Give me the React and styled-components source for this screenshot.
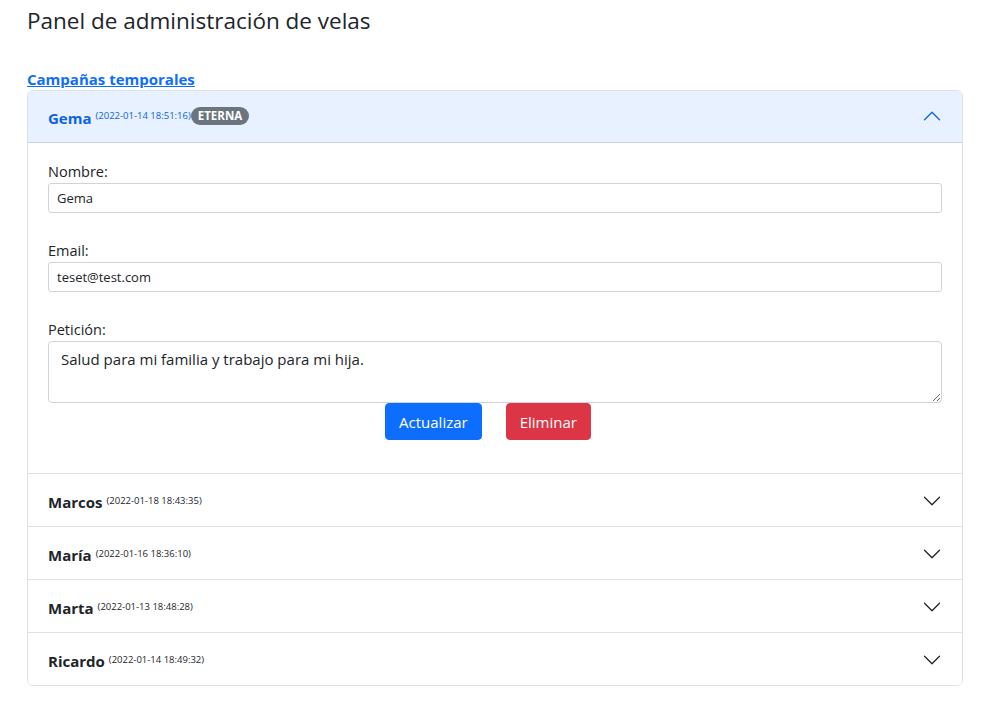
import React from "react";
import styled, { createGlobalStyle } from "styled-components";

const Global = createGlobalStyle`
  html, body { margin: 0; padding: 0; background: #fff; }
  body { font-family: "Open Sans", "Noto Sans", sans-serif; color: #212529; }
  * { box-sizing: border-box; }
`;

const Page = styled.div`
  padding: 6px 24px 20px 27px;
`;

const Title = styled.h1`
  margin: 0;
  font-size: 22.5px;
  font-weight: 500;
  line-height: 30px;
  color: #212529;
`;

const SectionLink = styled.a`
  display: inline-block;
  margin-top: 33px;
  font-size: 15px;
  font-weight: 700;
  line-height: 21px;
  color: #0d6efd;
  text-decoration: underline;
`;

const Accordion = styled.div`
  border: 1px solid #dee2e6;
  border-radius: 6px;
  overflow: hidden;
`;

const Item = styled.div`
  & + & { border-top: 1px solid #dee2e6; }
`;

const Header = styled.div`
  display: flex;
  align-items: center;
  height: 52px;
  padding: 0 20px;
  background: ${(p) => (p.$open ? "#e7f1ff" : "#fff")};
  color: ${(p) => (p.$open ? "#0c63e4" : "#212529")};
  box-shadow: ${(p) => (p.$open ? "inset 0 -1px 0 rgba(0,0,0,.125)" : "none")};
`;

const Name = styled.span`
  font-size: 15px;
  font-weight: 700;
  margin-top: ${(p) => (p.$open ? "1px" : "4px")};
`;

const DateText = styled.span`
  font-size: 9.5px;
  margin-left: 4px;
  margin-top: ${(p) => (p.$open ? "-3px" : "0px")};
`;

const Badge = styled.span`
  display: inline-block;
  background: #6c757d;
  color: #fff;
  font-size: 11.5px;
  font-weight: 700;
  border-radius: 10px;
  padding: 0 7px;
  line-height: 18px;
  margin-top: -3px;
`;

const Chevron = styled.svg`
  margin-left: auto;
  width: 20px;
  height: 20px;
  transform: ${(p) => (p.$open ? "rotate(-180deg)" : "none")};
  margin-top: ${(p) => (p.$open ? "-2px" : "2px")};
`;

const Body = styled.div`
  padding: 18px 20px 33px;
`;

const Label = styled.label`
  display: block;
  font-size: 14.5px;
  line-height: 22px;
  color: #212529;
  margin-top: ${(p) => p.$top || "0"};
`;

const Input = styled.input`
  display: block;
  width: 100%;
  height: 30px;
  padding: 4px 8px;
  font-family: inherit;
  font-size: 13px;
  color: #212529;
  border: 1px solid #ced4da;
  border-radius: 3px;
  outline: none;
`;

const TextArea = styled.textarea`
  display: block;
  width: 100%;
  height: 62px;
  padding: 6px 12px;
  font-family: inherit;
  font-size: 15px;
  line-height: 1.5;
  color: #212529;
  border: 1px solid #ced4da;
  border-radius: 4px;
  outline: none;
  resize: vertical;
`;

const Actions = styled.div`
  display: flex;
  justify-content: center;
  gap: 24px;
  padding-right: 14px;
`;

const Button = styled.button`
  height: 37px;
  padding: 0 13px;
  font-family: inherit;
  font-size: 15px;
  color: #fff;
  border: 1px solid ${(p) => p.$bg};
  background: ${(p) => p.$bg};
  border-radius: 4px;
`;

const ChevronIcon = ({ open }) => (
  <Chevron $open={open} viewBox="0 0 16 16" fill={open ? "#0c63e4" : "#212529"}>
    <path
      fillRule="evenodd"
      d="M1.646 4.646a.5.5 0 0 1 .708 0L8 10.293l5.646-5.647a.5.5 0 0 1 .708.708l-6 6a.5.5 0 0 1-.708 0l-6-6a.5.5 0 0 1 0-.708z"
    />
  </Chevron>
);

const rows = [
  { name: "Marcos", date: "(2022-01-18 18:43:35)" },
  { name: "María", date: "(2022-01-16 18:36:10)" },
  { name: "Marta", date: "(2022-01-13 18:48:28)" },
  { name: "Ricardo", date: "(2022-01-14 18:49:32)" },
];

export default function App() {
  return (
    <Page>
      <Global />
      <Title>Panel de administración de velas</Title>
      <SectionLink href="#">Campañas temporales</SectionLink>
      <Accordion>
        <Item>
          <Header $open>
            <Name $open>Gema</Name>
            <DateText $open>(2022-01-14 18:51:16)</DateText>
            <Badge>ETERNA</Badge>
            <ChevronIcon open />
          </Header>
          <Body>
            <Label>Nombre:</Label>
            <Input defaultValue="Gema" />
            <Label $top="27px">Email:</Label>
            <Input defaultValue="teset@test.com" />
            <Label $top="27px">Petición:</Label>
            <TextArea defaultValue="Salud para mi familia y trabajo para mi hija." />
            <Actions>
              <Button $bg="#0d6efd">Actualizar</Button>
              <Button $bg="#dc3545">Eliminar</Button>
            </Actions>
          </Body>
        </Item>
        {rows.map((r) => (
          <Item key={r.name}>
            <Header>
              <Name>{r.name}</Name>
              <DateText>{r.date}</DateText>
              <ChevronIcon />
            </Header>
          </Item>
        ))}
      </Accordion>
    </Page>
  );
}
